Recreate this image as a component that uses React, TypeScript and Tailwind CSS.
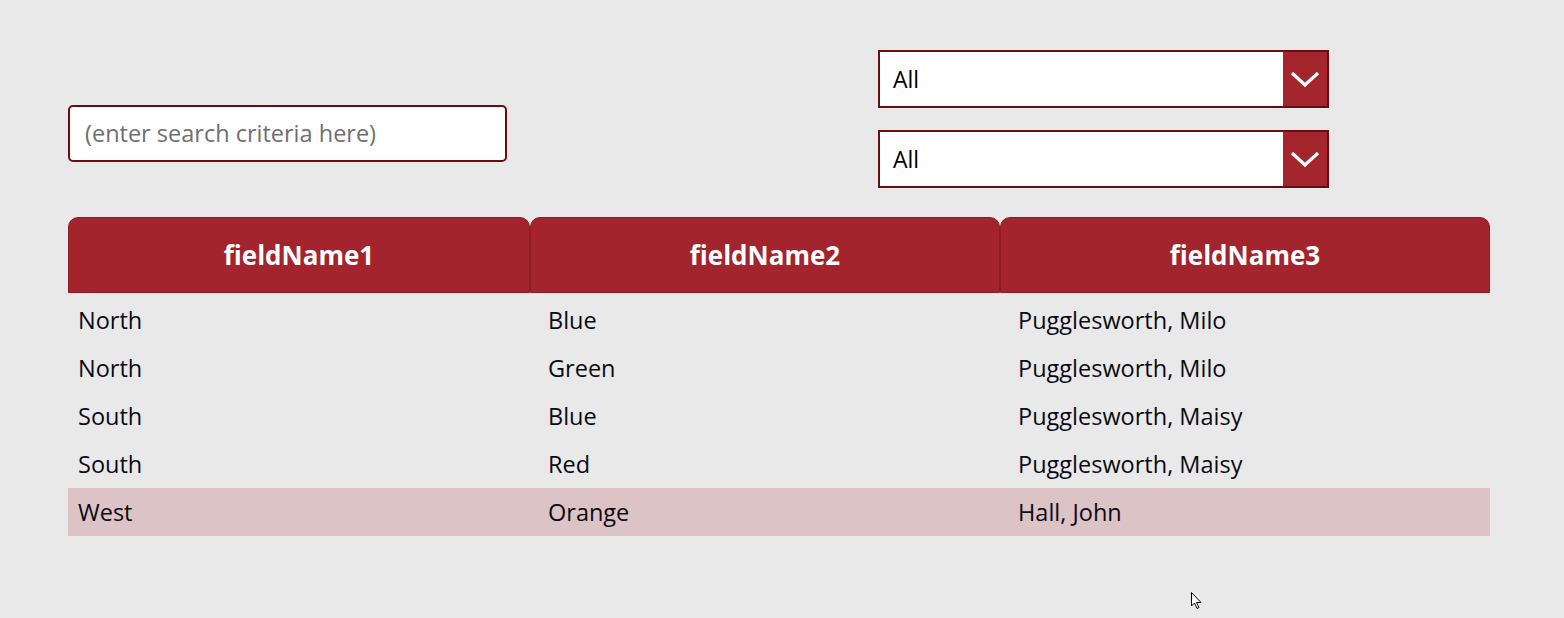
const rows = [
  { a: "North", b: "Blue", c: "Pugglesworth, Milo" },
  { a: "North", b: "Green", c: "Pugglesworth, Milo" },
  { a: "South", b: "Blue", c: "Pugglesworth, Maisy" },
  { a: "South", b: "Red", c: "Pugglesworth, Maisy" },
  { a: "West", b: "Orange", c: "Hall, John", selected: true },
]

const headers = [
  { label: "fieldName1", w: "w-[462px]" },
  { label: "fieldName2", w: "w-[470px]" },
  { label: "fieldName3", w: "w-[490px]" },
]

function Dropdown() {
  return (
    <div className="flex h-[58px] w-[451px] border-2 border-[#6b0d10] bg-white">
      <div className="flex flex-1 items-center pl-[13px] text-[23px] text-black">All</div>
      <div className="flex w-[44px] items-center justify-center bg-[#a4262c]">
        <svg width="30" height="17" viewBox="0 0 30 17" fill="none">
          <path d="M2 2 L15 14 L28 2" stroke="white" strokeWidth="3.2" />
        </svg>
      </div>
    </div>
  )
}

export default function App() {
  return (
    <div className="relative h-[618px] w-full bg-[#e9e9e9] font-['Open_Sans',sans-serif]">
      {/* Filters */}
      <div className="flex pl-[68px] pt-[50px]">
        <div className="pt-[55px]">
          <div className="flex h-[57px] w-[439px] items-center rounded-[5px] border-2 border-[#6b0d10] bg-white pl-[15px] text-[23.5px] text-[#6f6f6f]">
            (enter search criteria here)
          </div>
        </div>
        <div className="ml-[371px] flex flex-col gap-[22px]">
          <Dropdown />
          <Dropdown />
        </div>
      </div>

      {/* Table */}
      <div className="ml-[68px] mt-[29px] w-[1422px]">
        <div className="flex">
          {headers.map((h) => (
            <div
              key={h.label}
              className={`${h.w} flex h-[76px] items-center justify-center rounded-t-[10px] border border-[#8e1d23] bg-[#a3242c] text-[26px] font-bold text-white`}
            >
              {h.label}
            </div>
          ))}
        </div>
        <div className="mt-[3px]">
          {rows.map((r, i) => (
            <div
              key={i}
              className={`flex h-[48px] items-center pt-[2px] text-[23.5px] text-[#0a0a14] ${r.selected ? "bg-[#dcc3c5]" : ""}`}
            >
              <div className="w-[462px] pl-[10px]">{r.a}</div>
              <div className="w-[470px] pl-[18px]">{r.b}</div>
              <div className="w-[490px] pl-[18px]">{r.c}</div>
            </div>
          ))}
        </div>
      </div>

      {/* mouse cursor */}
      <svg className="absolute left-[1191px] top-[592px]" width="12" height="18" viewBox="0 0 12 18">
        <path d="M0.5 0.5 L0.5 14 L3.5 11 L6 16.5 L8 15.5 L5.5 10.5 L10 10.5 Z" fill="white" stroke="black" strokeWidth="1" />
      </svg>
    </div>
  )
}
